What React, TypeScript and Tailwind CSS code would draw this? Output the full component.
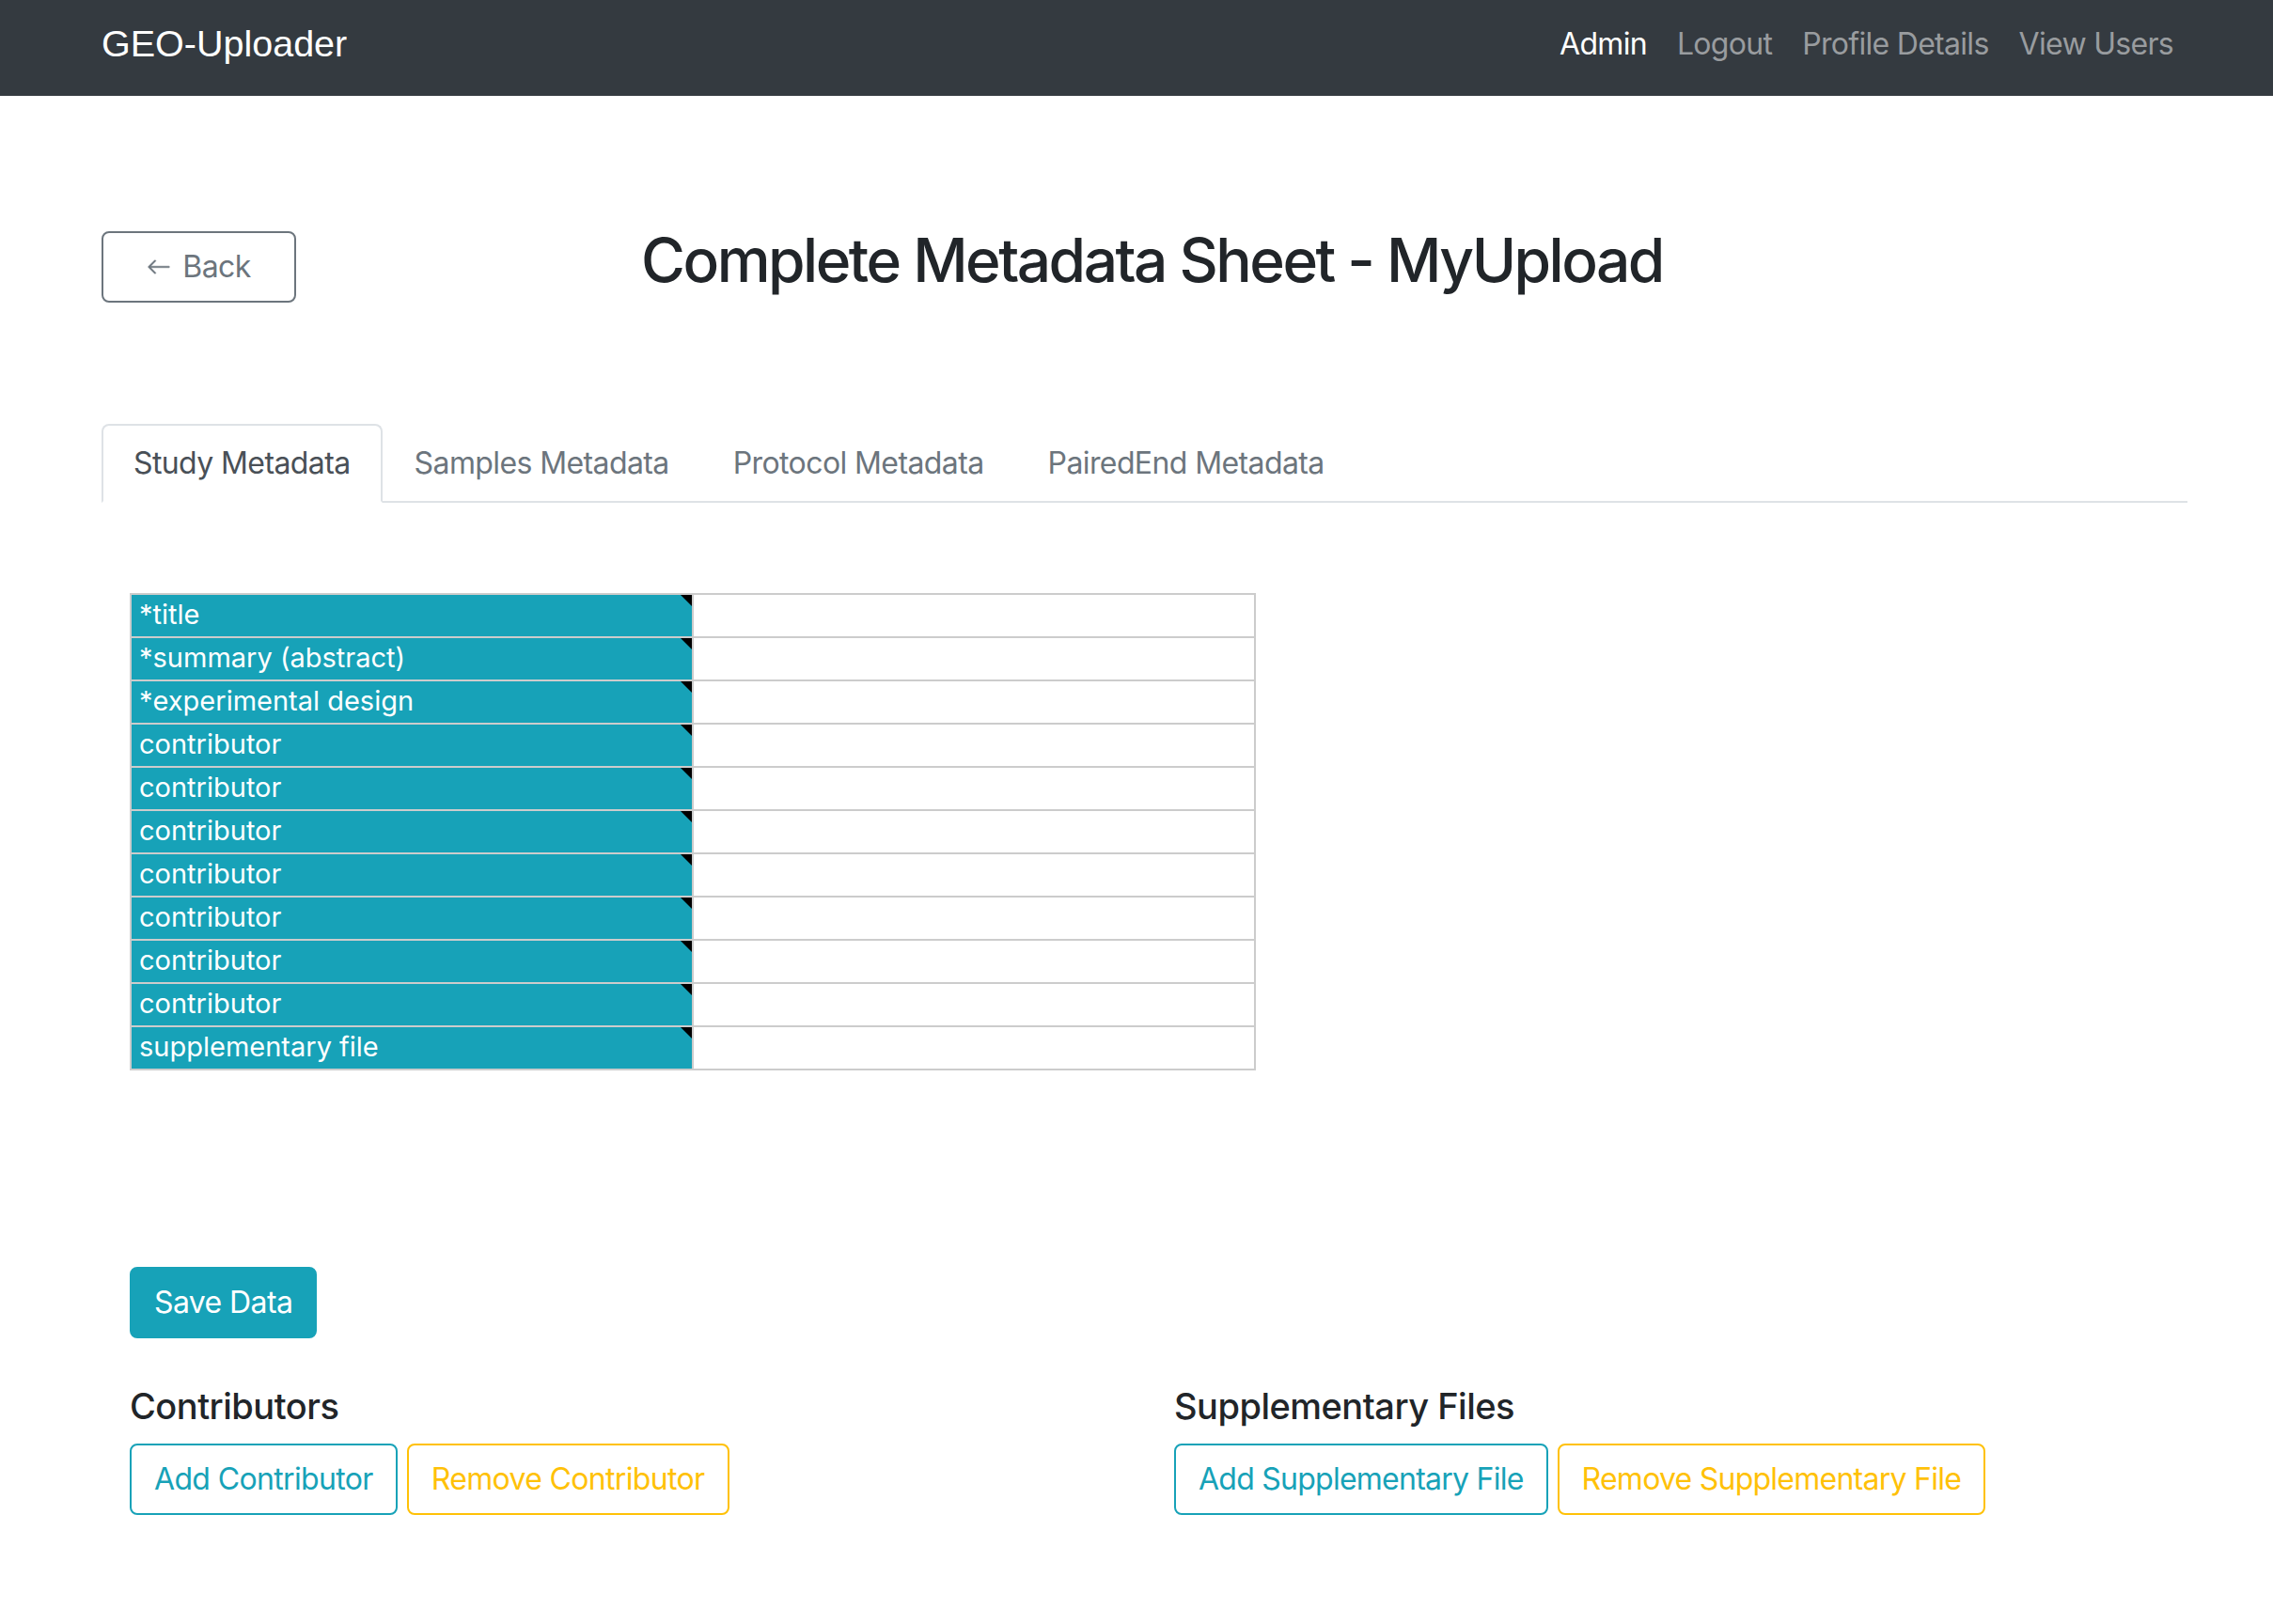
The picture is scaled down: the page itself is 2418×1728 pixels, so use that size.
import React from "react";

const labels = [
  "*title",
  "*summary (abstract)",
  "*experimental design",
  "contributor",
  "contributor",
  "contributor",
  "contributor",
  "contributor",
  "contributor",
  "contributor",
  "supplementary file",
];

const font = { fontFamily: "Inter, 'Noto Sans', sans-serif" };

export default function App() {
  return (
    <div className="min-h-[1728px] bg-white text-[#212529]" style={font}>
      {/* Navbar */}
      <nav className="h-[102px] bg-[#343a40] flex items-center justify-between pl-[108px] pr-[106px]">
        <div className="pb-[8px] text-[39.5px] text-white leading-none" style={{ fontFamily: "'Liberation Sans', Arial, sans-serif" }}>
          GEO-Uploader
        </div>
        <div className="pb-[8px] flex items-center gap-[32px] text-[32px] leading-[48px] tracking-[-0.7px]">
          <span className="text-white">Admin</span>
          <span className="text-[#999c9f]">Logout</span>
          <span className="text-[#999c9f]">Profile Details</span>
          <span className="text-[#999c9f]">View Users</span>
        </div>
      </nav>

      <div className="pl-[108px] pr-[91px]">
        {/* Header row */}
        <div className="mt-[136px] grid grid-cols-[1fr_auto_1fr] items-start">
          <div className="flex">
            <button className="mt-[8px] h-[76px] w-[207px] flex items-center justify-center gap-[12px] rounded-[8px] border-2 border-[#6c757d] text-[#6c757d] text-[32px] leading-[48px] tracking-[-0.6px]">
              <svg width="26" height="26" viewBox="0 0 16 16" fill="currentColor" stroke="currentColor" strokeWidth="0.3">
                <path fillRule="evenodd" d="M15 8a.5.5 0 0 0-.5-.5H2.707l3.147-3.146a.5.5 0 1 0-.708-.708l-4 4a.5.5 0 0 0 0 .708l4 4a.5.5 0 0 0 .708-.708L2.707 8.5H14.5A.5.5 0 0 0 15 8z" />
              </svg>
              <span>Back</span>
            </button>
          </div>
          <h2 className="pl-[16px] text-[64px] leading-[77px] font-medium text-[#212529] whitespace-nowrap tracking-[-2.5px]">
            Complete Metadata Sheet - MyUpload
          </h2>
          <div />
        </div>

        {/* Tabs */}
        <ul className="mt-[129px] flex border-b-2 border-[#dee2e6] text-[32px] leading-[48px] tracking-[-0.6px]">
          <li className="-mb-[2px] border-2 border-[#dee2e6] border-b-white rounded-t-[8px] bg-white px-[32px] py-[16px] text-[#495057]">
            Study Metadata
          </li>
          <li className="-mb-[2px] border-2 border-transparent px-[32px] py-[16px] text-[#6c757d]">
            Samples Metadata
          </li>
          <li className="-mb-[2px] border-2 border-transparent px-[32px] py-[16px] text-[#6c757d]">
            Protocol Metadata
          </li>
          <li className="-mb-[2px] border-2 border-transparent px-[32px] py-[16px] text-[#6c757d]">
            PairedEnd Metadata
          </li>
        </ul>

        <div className="pl-[30px]">
          {/* Table */}
          <div className="mt-[96px] w-[1198px] border-t-2 border-l-2 border-[#cccccc]">
            {labels.map((l, i) => (
              <div key={i} className="flex h-[46px] border-b-2 border-[#cccccc]">
                <div className="relative w-[598px] border-r-2 border-[#cccccc] bg-[#17a2b8] pl-[8px] text-[29px] leading-[41px] text-white">
                  {l}
                  <div className="absolute top-0 right-0 w-0 h-0 border-t-[12px] border-t-black border-l-[12px] border-l-transparent" />
                </div>
                <div className="w-[598px] border-r-2 border-[#cccccc] bg-white" />
              </div>
            ))}
          </div>

          {/* Save */}
          <button className="mt-[209px] h-[76px] px-[24px] rounded-[8px] border-2 border-[#17a2b8] bg-[#17a2b8] text-white text-[32px] leading-[48px] tracking-[-0.6px]">
            Save Data
          </button>

          {/* Two columns */}
          <div className="mt-[49px] grid grid-cols-[1111px_1fr]">
            <div>
              <h5 className="text-[38px] leading-[46px] font-medium mb-[17px] tracking-[-0.5px]">Contributors</h5>
              <div className="flex gap-[10px] text-[32px] leading-[48px] tracking-[-0.65px]">
                <button className="h-[76px] px-[24px] rounded-[8px] border-2 border-[#17a2b8] text-[#17a2b8]">
                  Add Contributor
                </button>
                <button className="h-[76px] px-[24px] rounded-[8px] border-2 border-[#ffc107] text-[#ffc107]">
                  Remove Contributor
                </button>
              </div>
            </div>
            <div>
              <h5 className="text-[38px] leading-[46px] font-medium mb-[17px] tracking-[-0.5px]">Supplementary Files</h5>
              <div className="flex gap-[10px] text-[32px] leading-[48px] tracking-[-0.75px]">
                <button className="h-[76px] px-[24px] rounded-[8px] border-2 border-[#17a2b8] text-[#17a2b8]">
                  Add Supplementary File
                </button>
                <button className="h-[76px] px-[24px] rounded-[8px] border-2 border-[#ffc107] text-[#ffc107]">
                  Remove Supplementary File
                </button>
              </div>
            </div>
          </div>
        </div>
      </div>
    </div>
  );
}
